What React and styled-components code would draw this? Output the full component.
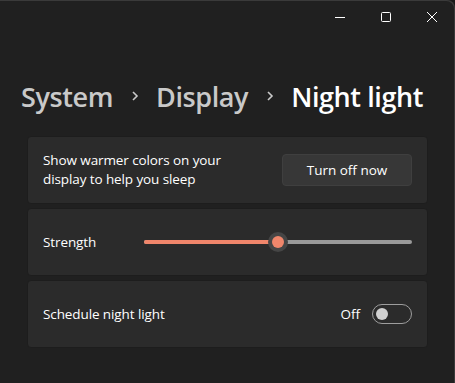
import styled, { createGlobalStyle } from "styled-components";

const GlobalStyle = createGlobalStyle`
  html, body {
    margin: 0;
    padding: 0;
    background: #1a1a1a;
  }
  body {
    font-family: "Open Sans", "Noto Sans", "Liberation Sans", sans-serif;
    color: #ffffff;
  }
`;

const Window = styled.div`
  width: 455px;
  height: 383px;
  box-sizing: border-box;
  background: #202020;
  border-top-right-radius: 8px;
  box-shadow: inset -1px 1px 0 #3a3a3a;
  overflow: hidden;
  display: flex;
  flex-direction: column;
`;

const TitleBar = styled.div`
  height: 33px;
  display: flex;
  justify-content: flex-end;
`;

const CaptionButton = styled.div`
  width: 46px;
  height: 100%;
  display: flex;
  align-items: center;
  justify-content: center;
  color: #ffffff;
`;

const Breadcrumb = styled.div`
  display: flex;
  align-items: center;
  padding: 50px 0 0 21px;
  height: 76px;
  box-sizing: border-box;
  font-size: 27px;
  font-weight: 600;
  letter-spacing: -0.4px;
`;

const Crumb = styled.span`
  color: ${(props) => (props.current ? "#ffffff" : "#c9c9c9")};
`;

const Chevron = styled.span`
  width: 43px;
  display: flex;
  justify-content: center;
  color: #c9c9c9;
`;

const Cards = styled.div`
  display: flex;
  flex-direction: column;
  gap: 4px;
  padding: 27px 27px 0 27px;
`;

const Card = styled.div`
  height: 68px;
  box-sizing: border-box;
  background: #2b2b2b;
  border: 1px solid #1d1d1d;
  border-radius: 4px;
  padding: 0 15px;
  display: flex;
  align-items: center;
  justify-content: space-between;
`;

const Label = styled.div`
  font-size: 13.5px;
  line-height: 19px;
  color: #ffffff;
  width: ${(props) => (props.width ? props.width : "auto")};
  letter-spacing: -0.1px;
`;

const Button = styled.button`
  width: 130px;
  height: 32px;
  background: #373737;
  border: 1px solid #3f3f3f;
  border-radius: 4px;
  color: #ffffff;
  font-family: inherit;
  font-size: 13.5px;
  padding: 0 0 1px;
`;

const Slider = styled.div`
  position: relative;
  width: 268px;
  height: 20px;
  display: flex;
  align-items: center;
`;

const Track = styled.div`
  width: 100%;
  height: 4px;
  border-radius: 2px;
  background: #9a9a9a;
  display: flex;
`;

const Fill = styled.div`
  height: 100%;
  border-radius: 2px;
  background: #f0866b;
`;

const Thumb = styled.div`
  position: absolute;
  top: 0;
  width: 20px;
  height: 20px;
  margin-left: -10px;
  border-radius: 50%;
  background: #454545;
  display: flex;
  align-items: center;
  justify-content: center;

  &::after {
    content: "";
    width: 12px;
    height: 12px;
    border-radius: 50%;
    background: #f0866b;
  }
`;

const ToggleGroup = styled.div`
  display: flex;
  align-items: center;
  gap: 12px;
  font-size: 13.5px;
`;

const Toggle = styled.div`
  width: 40px;
  height: 20px;
  box-sizing: border-box;
  border: 1px solid #9d9d9d;
  border-radius: 10px;
  display: flex;
  align-items: center;
  padding-left: 3px;
`;

const Knob = styled.div`
  width: 12px;
  height: 12px;
  border-radius: 50%;
  background: #d0d0d0;
`;

const strength = 50;

export default function App() {
  return (
    <>
      <GlobalStyle />
      <Window>
        <TitleBar>
          <CaptionButton>
            <svg width="10" height="10" viewBox="0 0 10 10">
              <path d="M0 5.5h10" stroke="#fff" strokeWidth="1" />
            </svg>
          </CaptionButton>
          <CaptionButton>
            <svg width="10" height="10" viewBox="0 0 10 10">
              <rect x="0.5" y="0.5" width="9" height="9" rx="1" fill="none" stroke="#fff" strokeWidth="1" />
            </svg>
          </CaptionButton>
          <CaptionButton>
            <svg width="10" height="10" viewBox="0 0 10 10">
              <path d="M0 0L10 10M10 0L0 10" stroke="#fff" strokeWidth="1" />
            </svg>
          </CaptionButton>
        </TitleBar>

        <Breadcrumb>
          <Crumb>System</Crumb>
          <Chevron>
            <svg width="8" height="12" viewBox="0 0 8 12">
              <path d="M2 2l4 4-4 4" fill="none" stroke="#c9c9c9" strokeWidth="1.6" />
            </svg>
          </Chevron>
          <Crumb>Display</Crumb>
          <Chevron>
            <svg width="8" height="12" viewBox="0 0 8 12">
              <path d="M2 2l4 4-4 4" fill="none" stroke="#c9c9c9" strokeWidth="1.6" />
            </svg>
          </Chevron>
          <Crumb current>Night light</Crumb>
        </Breadcrumb>

        <Cards>
          <Card>
            <Label width="200px">Show warmer colors on your display to help you sleep</Label>
            <Button>Turn off now</Button>
          </Card>
          <Card>
            <Label>Strength</Label>
            <Slider>
              <Track>
                <Fill style={{ width: `${strength}%` }} />
              </Track>
              <Thumb style={{ left: `${strength}%` }} />
            </Slider>
          </Card>
          <Card>
            <Label>Schedule night light</Label>
            <ToggleGroup>
              <span>Off</span>
              <Toggle>
                <Knob />
              </Toggle>
            </ToggleGroup>
          </Card>
        </Cards>
      </Window>
    </>
  );
}
